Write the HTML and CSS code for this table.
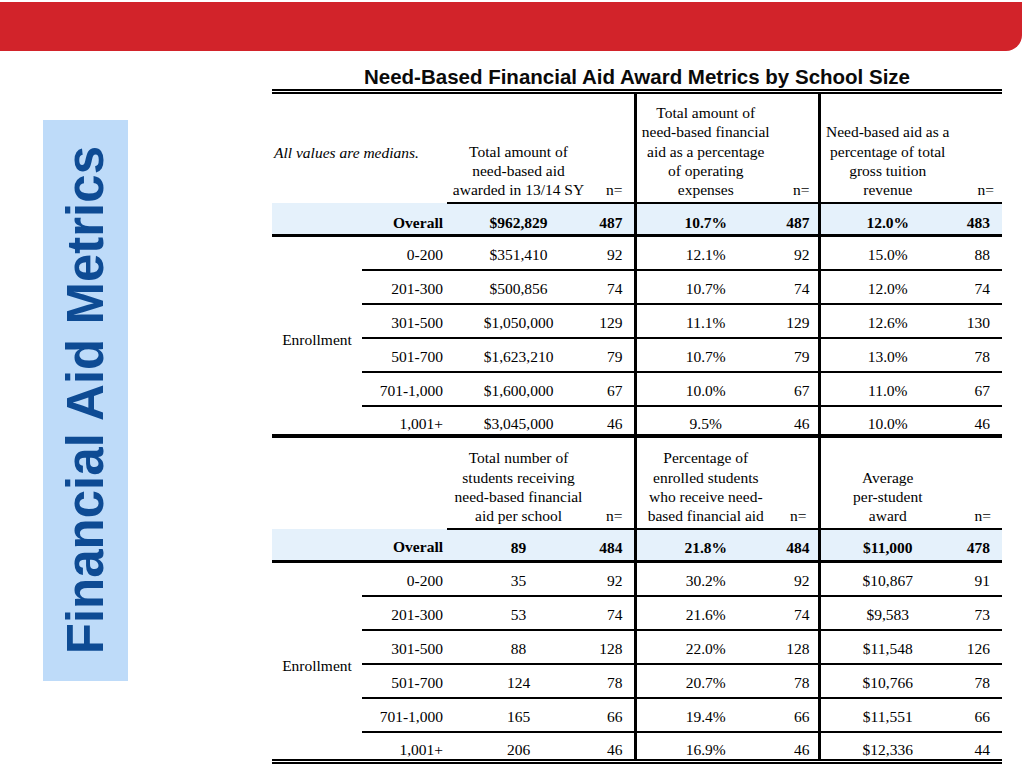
FILE: index.html
```html
<!DOCTYPE html>
<html>
<head>
<meta charset="utf-8">
<title>Financial Aid Metrics</title>
<link rel="stylesheet" href="styles.css">
</head>
<body>
<header class="bar"></header>
<div class="main">
  <aside class="side"><span class="side-text">Financial Aid Metrics</span></aside>
  <section class="content">
    <h1 class="title">Need-Based Financial Aid Award Metrics by School Size</h1>
    <table class="metrics">
      <colgroup>
        <col class="c-a"><col class="c-b"><col class="c-c"><col class="c-d"><col class="c-e"><col class="c-f"><col class="c-g"><col class="c-h">
      </colgroup>
      <tbody>
        <tr class="head head-1">
          <th colspan="2" class="note">All values are medians.</th>
          <th class="hv">Total amount of<br>need-based aid<br>awarded in 13/14 SY</th>
          <th class="hn vr">n=</th>
          <th class="hv">Total amount of<br>need-based financial<br>aid as a percentage<br>of operating<br>expenses</th>
          <th class="hn vr">n=</th>
          <th class="hv">Need-based aid as a<br>percentage of total<br>gross tuition<br>revenue</th>
          <th class="hn">n=</th>
        </tr>
        <tr class="overall overall-1">
          <td></td><td class="lbl">Overall</td><td class="v">$962,829</td><td class="n vr">487</td><td class="v">10.7%</td><td class="n vr">487</td><td class="v">12.0%</td><td class="n">483</td>
        </tr>
        <tr class="row">
          <td rowspan="6" class="group">Enrollment</td>
          <td class="lbl">0-200</td><td class="v">$351,410</td><td class="n vr">92</td><td class="v">12.1%</td><td class="n vr">92</td><td class="v">15.0%</td><td class="n">88</td>
        </tr>
        <tr class="row"><td class="lbl">201-300</td><td class="v">$500,856</td><td class="n vr">74</td><td class="v">10.7%</td><td class="n vr">74</td><td class="v">12.0%</td><td class="n">74</td></tr>
        <tr class="row"><td class="lbl">301-500</td><td class="v">$1,050,000</td><td class="n vr">129</td><td class="v">11.1%</td><td class="n vr">129</td><td class="v">12.6%</td><td class="n">130</td></tr>
        <tr class="row"><td class="lbl">501-700</td><td class="v">$1,623,210</td><td class="n vr">79</td><td class="v">10.7%</td><td class="n vr">79</td><td class="v">13.0%</td><td class="n">78</td></tr>
        <tr class="row"><td class="lbl">701-1,000</td><td class="v">$1,600,000</td><td class="n vr">67</td><td class="v">10.0%</td><td class="n vr">67</td><td class="v">11.0%</td><td class="n">67</td></tr>
        <tr class="row last"><td class="lbl">1,001+</td><td class="v">$3,045,000</td><td class="n vr">46</td><td class="v">9.5%</td><td class="n vr">46</td><td class="v">10.0%</td><td class="n">46</td></tr>

        <tr class="head head-2">
          <th colspan="2" class="note"></th>
          <th class="hv">Total number of<br>students receiving<br>need-based financial<br>aid per school</th>
          <th class="hn vr">n=</th>
          <th class="hv">Percentage of<br>enrolled students<br>who receive need-<br>based financial aid</th>
          <th class="hn vr">n=</th>
          <th class="hv">Average<br>per-student<br>award</th>
          <th class="hn">n=</th>
        </tr>
        <tr class="overall">
          <td></td><td class="lbl">Overall</td><td class="v">89</td><td class="n vr">484</td><td class="v">21.8%</td><td class="n vr">484</td><td class="v">$11,000</td><td class="n">478</td>
        </tr>
        <tr class="row">
          <td rowspan="6" class="group">Enrollment</td>
          <td class="lbl">0-200</td><td class="v">35</td><td class="n vr">92</td><td class="v">30.2%</td><td class="n vr">92</td><td class="v">$10,867</td><td class="n">91</td>
        </tr>
        <tr class="row"><td class="lbl">201-300</td><td class="v">53</td><td class="n vr">74</td><td class="v">21.6%</td><td class="n vr">74</td><td class="v">$9,583</td><td class="n">73</td></tr>
        <tr class="row"><td class="lbl">301-500</td><td class="v">88</td><td class="n vr">128</td><td class="v">22.0%</td><td class="n vr">128</td><td class="v">$11,548</td><td class="n">126</td></tr>
        <tr class="row"><td class="lbl">501-700</td><td class="v">124</td><td class="n vr">78</td><td class="v">20.7%</td><td class="n vr">78</td><td class="v">$10,766</td><td class="n">78</td></tr>
        <tr class="row"><td class="lbl">701-1,000</td><td class="v">165</td><td class="n vr">66</td><td class="v">19.4%</td><td class="n vr">66</td><td class="v">$11,551</td><td class="n">66</td></tr>
        <tr class="row last end"><td class="lbl">1,001+</td><td class="v">206</td><td class="n vr">46</td><td class="v">16.9%</td><td class="n vr">46</td><td class="v">$12,336</td><td class="n">44</td></tr>
      </tbody>
    </table>
  </section>
</div>
</body>
</html>
```

FILE: styles.css
```css
* { box-sizing: border-box; }
html, body { margin: 0; padding: 0; background: #ffffff; }
body { width: 1024px; height: 768px; overflow: hidden; }

.bar {
  height: 49px;
  margin-top: 2px;
  width: 1022px;
  background: #d2232a;
  border-bottom-right-radius: 16px;
}

.main {
  display: flex;
  align-items: flex-start;
}

.side {
  margin-left: 43px;
  margin-top: 69px;
  width: 85px;
  height: 561px;
  background: #bedbf9;
  display: flex;
  align-items: center;
  justify-content: center;
}
.side-text {
  writing-mode: vertical-rl;
  transform: rotate(180deg);
  font-family: "Liberation Sans", Arial, sans-serif;
  font-weight: bold;
  font-size: 51px;
  line-height: 1;
  color: #0e4b94;
  white-space: nowrap;
}

.content {
  margin-left: 144px;
  width: 730px;
}

.title {
  margin: 14px 0 0 0;
  font-family: "Liberation Sans", Arial, sans-serif;
  font-weight: bold;
  font-size: 20.5px;
  line-height: 24px;
  text-align: center;
  color: #0a0a0a;
}

.metrics {
  width: 730px;
  table-layout: fixed;
  border-collapse: collapse;
  border-top: 5px double #000;
  font-family: "Liberation Serif", "Times New Roman", serif;
  font-size: 15.5px;
  color: #000;
}
.c-a { width: 90px; }
.c-b { width: 85px; }
.c-c { width: 143px; }
.c-d { width: 45px; }
.c-e { width: 140px; }
.c-f { width: 44px; }
.c-g { width: 136px; }
.c-h { width: 47px; }

.metrics th, .metrics td {
  padding: 0;
  font-weight: normal;
  white-space: nowrap;
}

.vr { border-right: 3px solid #000; }

.head th {
  vertical-align: bottom;
  line-height: 19.3px;
  padding-bottom: 2px;
}
.head-1 th { height: 111px; }
.head-2 th { height: 93px; }
.head .hv, .head .hn { border-bottom: 2px solid #000; }
.head .hv { text-align: center; }
.head .hn { text-align: right; padding-right: 11px; }
.head-1 .hn + .hv + .hn { padding-right: 8px; }
.head .note {
  text-align: left;
  font-style: italic;
  padding-left: 2px;
  padding-bottom: 40px;
}

.overall td {
  background: #e5f1fb;
  font-weight: bold;
  height: 33px;
  border-bottom: 3px solid #000;
  padding-top: 6px;
}
.overall-1 td { padding-top: 9px; }

.row td { height: 34px; padding-top: 5px; }
.row .lbl, .row .v, .row .n { border-bottom: 2px solid #000; }
.row.last td { height: 30px; padding-top: 8px; }
.row.last .lbl, .row.last .v, .row.last .n { border-bottom: none; }
.row.last { border-bottom: 4px solid #000; }
.row.end { border-bottom: 5px double #000; }

.row .group { text-align: center; vertical-align: middle; border-bottom: none; padding-top: 9px; }
.lbl { text-align: right; padding-right: 4px !important; }
.v { text-align: center; }
.n { text-align: right; padding-right: 11px !important; }
.n.vr + .v + .n.vr { padding-right: 8px !important; }
.n.vr + .v + .n.vr + .v + .n { padding-right: 12px !important; }
```
